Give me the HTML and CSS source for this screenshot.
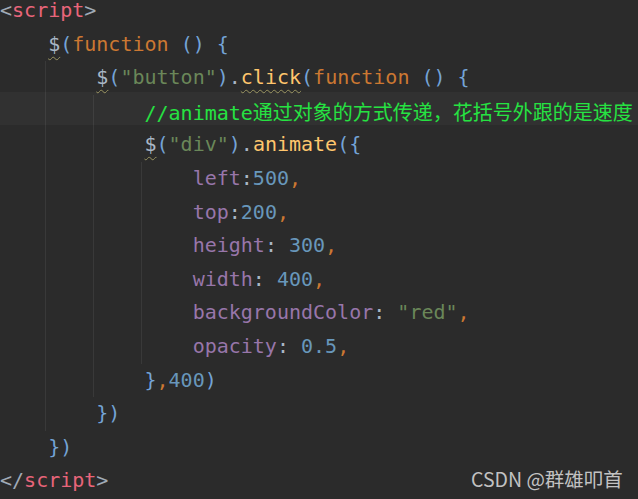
FILE: index.html
```html
<!DOCTYPE html>
<html>
<head>
<meta charset="utf-8">
<link rel="stylesheet" href="styles.css">
</head>
<body>
<div class="editor">
  <div class="line first"><span class="tag">&lt;</span><span class="tname">script</span><span class="tag">&gt;</span></div>
  <div class="line in"><span class="jq">$</span><span class="br">(</span><span class="kw">function</span> <span class="br">()</span> <span class="br">{</span></div>
  <div class="block">
    <div class="line in"><span class="jq">$</span><span class="br">(</span><span class="str">"button"</span><span class="br">)</span><span class="pun">.</span><span class="fn warn">click</span><span class="br">(</span><span class="kw">function</span> <span class="br">()</span> <span class="br">{</span></div>
    <div class="block">
      <div class="line in current"><span class="cmt">//animate<span class="cjk">通过对象的方式传递，花括号外跟的是速度</span></span></div>
      <div class="line in"><span class="jq">$</span><span class="br">(</span><span class="str">"div"</span><span class="br">)</span><span class="pun">.</span><span class="fn">animate</span><span class="br">({</span></div>
      <div class="block">
        <div class="line in"><span class="prop">left</span><span class="pun">:</span><span class="num">500</span><span class="com">,</span></div>
        <div class="line in"><span class="prop">top</span><span class="pun">:</span><span class="num">200</span><span class="com">,</span></div>
        <div class="line in"><span class="prop">height</span><span class="pun">:</span> <span class="num">300</span><span class="com">,</span></div>
        <div class="line in"><span class="prop">width</span><span class="pun">:</span> <span class="num">400</span><span class="com">,</span></div>
        <div class="line in"><span class="prop">backgroundColor</span><span class="pun">:</span> <span class="str">"red"</span><span class="com">,</span></div>
        <div class="line in"><span class="prop">opacity</span><span class="pun">:</span> <span class="num">0.5</span><span class="com">,</span></div>
      </div>
      <div class="line in"><span class="br">}</span><span class="com">,</span><span class="num">400</span><span class="br">)</span></div>
    </div>
    <div class="line in"><span class="br">})</span></div>
  </div>
  <div class="line in"><span class="br">})</span></div>
  <div class="line"><span class="tag">&lt;/</span><span class="tname">script</span><span class="tag">&gt;</span></div>
</div>
<div class="watermark">CSDN @群雄叩首</div>
</body>
</html>
```
FILE: styles.css
```css
html, body {
  margin: 0;
  padding: 0;
  background: #2b2b2b;
  overflow: hidden;
  width: 638px;
  height: 499px;
}
body {
  position: relative;
}
.editor {
  font-family: "DejaVu Sans Mono", "Liberation Mono", monospace;
  font-size: 20px;
  color: #a9b7c6;
}
.line {
  height: 33.6px;
  line-height: 33.6px;
  white-space: pre;
  position: relative;
}
.line.first {
  height: 27.6px;
  line-height: 21.6px;
}
.line.in {
  padding-left: 4ch;
}
.block {
  margin-left: calc(4ch - 3px);
  border-left: 1px solid #393939;
  padding-left: 2px;
}
.current::before {
  content: "";
  position: absolute;
  top: -3px;
  bottom: 3px;
  left: -300px;
  right: -300px;
  background: rgba(255, 255, 255, 0.03);
  pointer-events: none;
}
.tag { color: #a0aab6; }
.tname { color: #e8657a; }
.jq {
  color: #a9b7c6;
  text-decoration: underline wavy #9a9460;
  text-decoration-thickness: 1px;
  text-underline-offset: 5px;
}
.br { color: #74a3d6; }
.kw { color: #cc7832; }
.str { color: #6a8759; }
.pun { color: #a9b7c6; }
.fn { color: #ffc66d; }
.warn {
  text-decoration: underline wavy #9a9460;
  text-decoration-thickness: 1px;
  text-underline-offset: 5px;
}
.cmt { color: #1fe23c; }
.cjk {
  font-family: "Noto Sans CJK SC", sans-serif;
  font-size: 20px;
}
.prop { color: #9876aa; }
.num { color: #6897bb; }
.com { color: #cc7832; }
.watermark {
  position: absolute;
  left: 471px;
  top: 466px;
  font-family: "Noto Sans CJK SC", "Noto Sans", sans-serif;
  font-size: 19.5px;
  line-height: 26px;
  color: #c2c2c2;
  white-space: nowrap;
}
```
